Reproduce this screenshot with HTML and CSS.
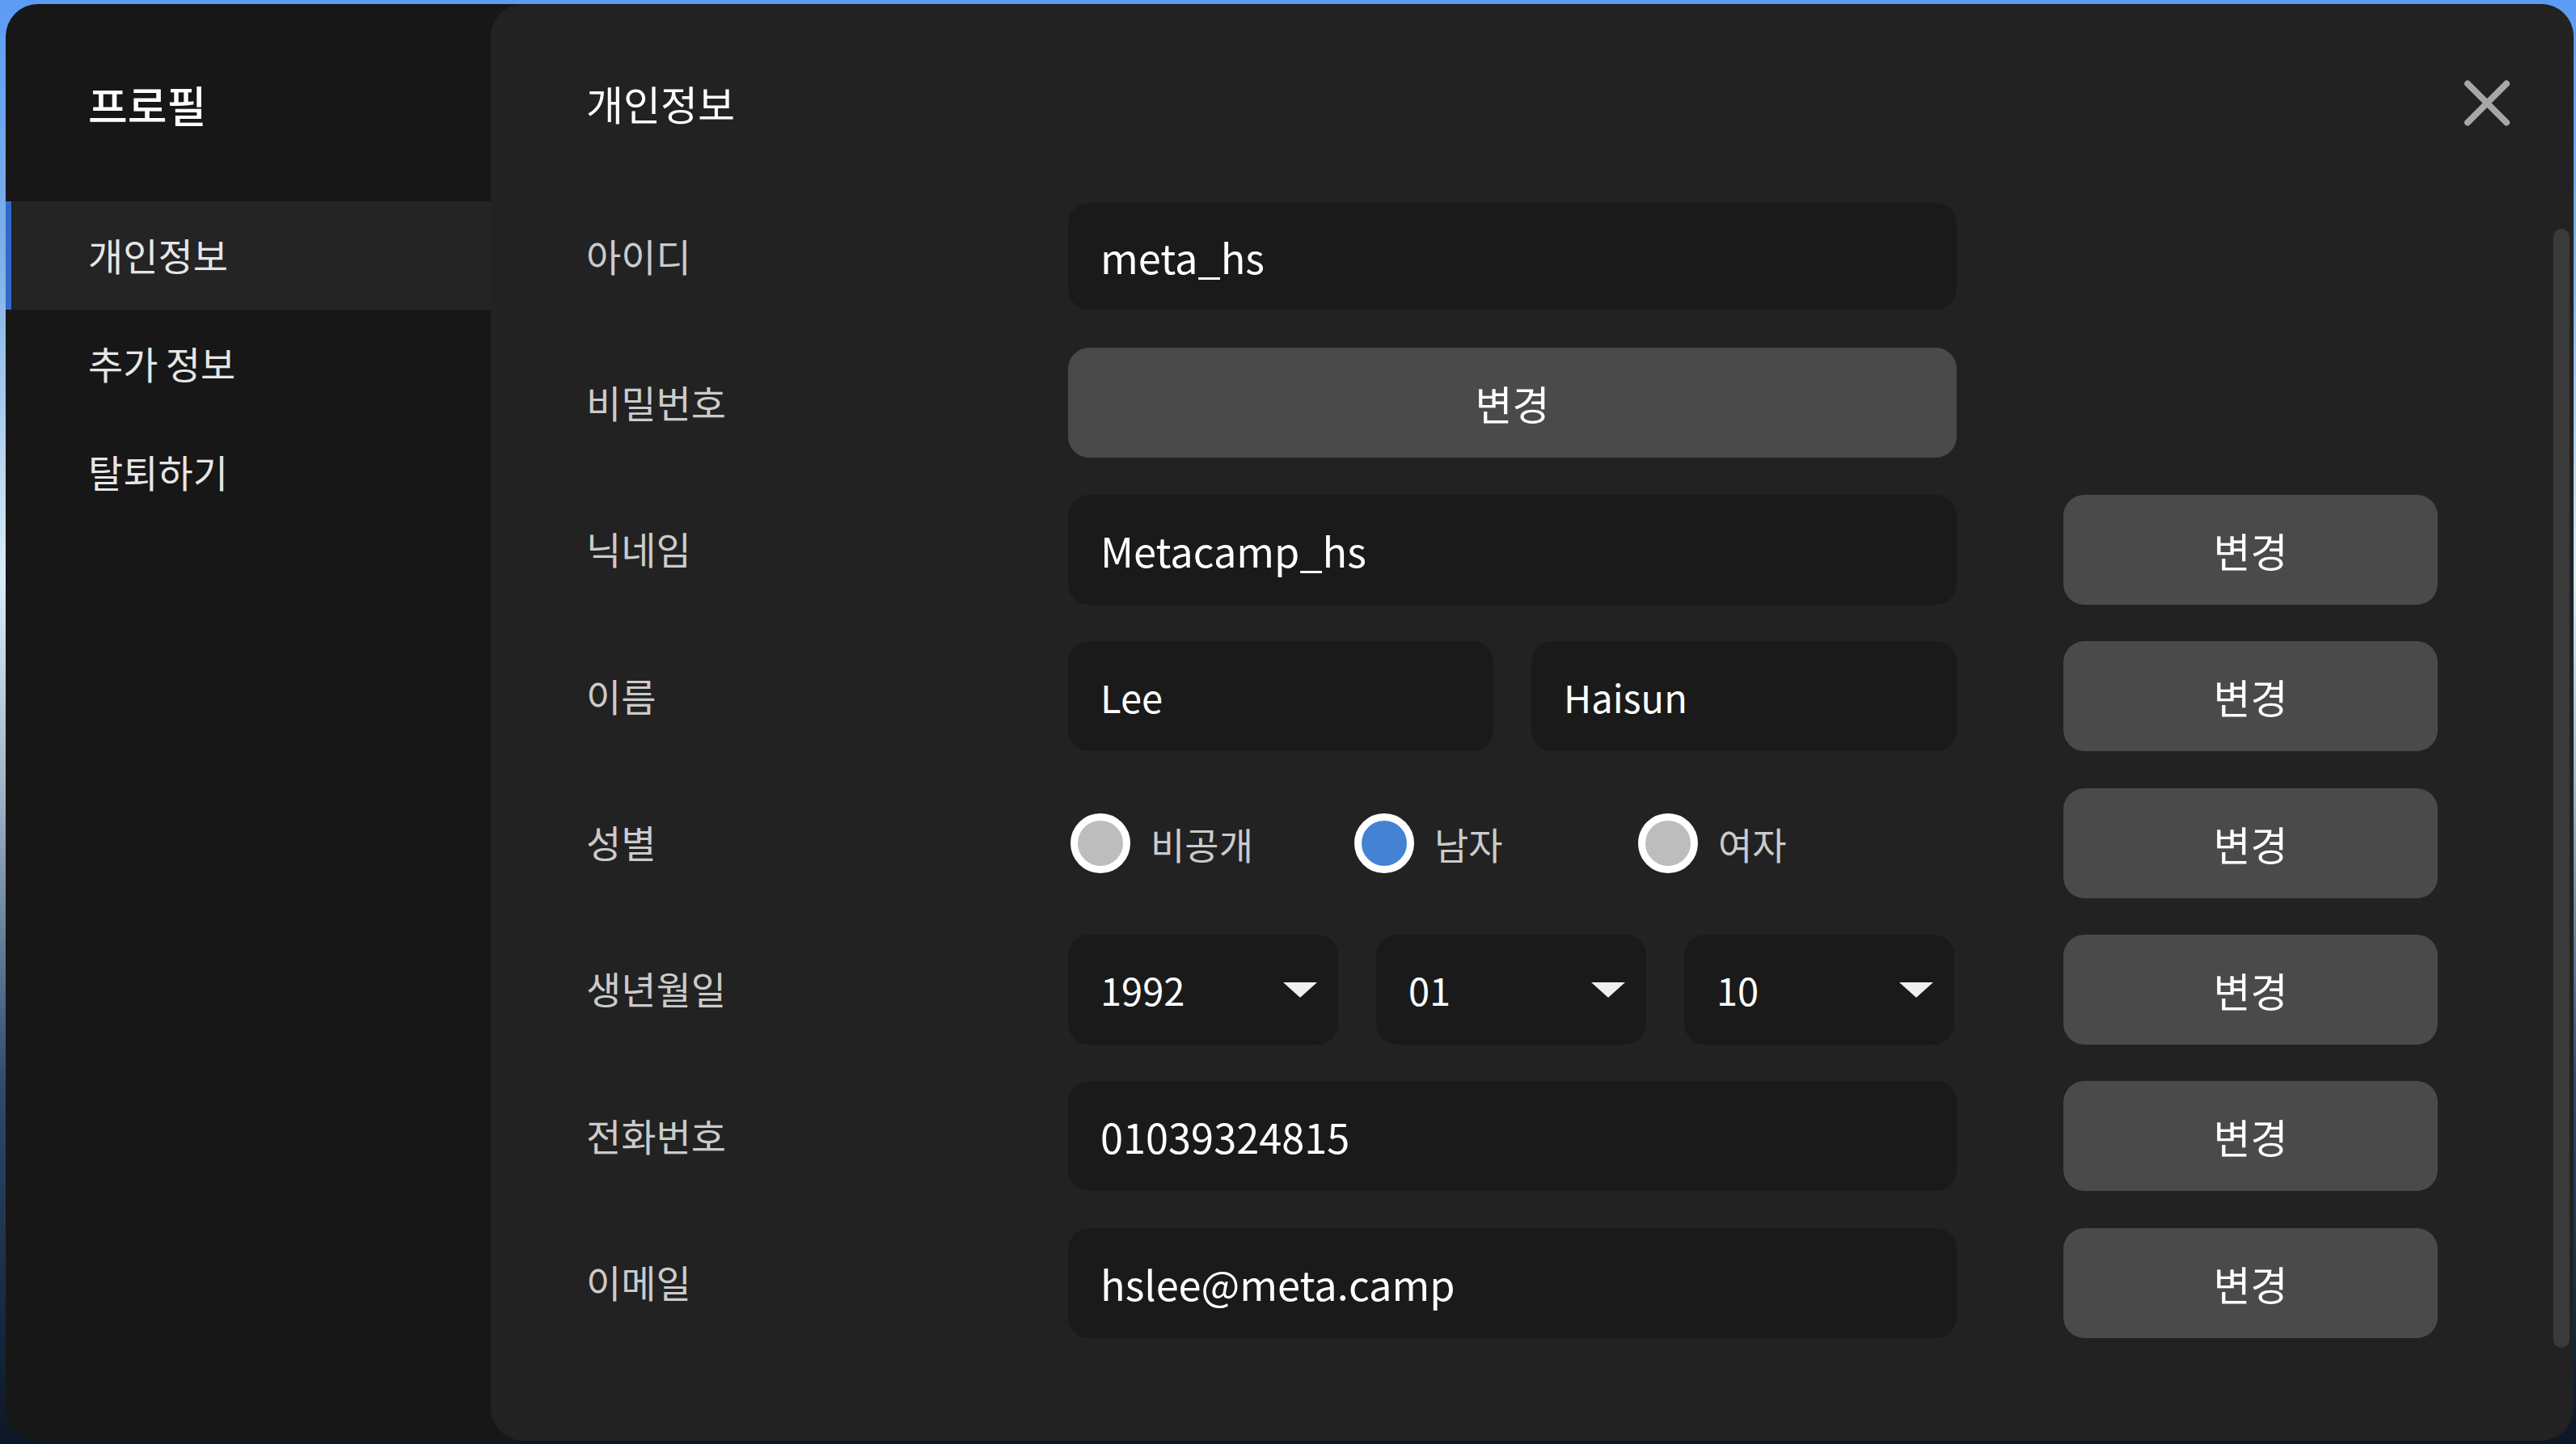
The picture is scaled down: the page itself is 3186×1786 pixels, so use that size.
FILE: index.html
```html
<!DOCTYPE html>
<html lang="ko">
<head>
<meta charset="utf-8">
<title>프로필</title>
<link rel="stylesheet" href="styles.css">
</head>
<body>
<div class="stage">
  <div class="modal">
    <aside class="sidebar">
      <div class="side-title">프로필</div>
      <nav class="side-nav">
        <div class="side-item active">개인정보</div>
        <div class="side-item">추가 정보</div>
        <div class="side-item">탈퇴하기</div>
      </nav>
    </aside>
    <main class="panel">
      <header class="panel-head">
        <h1 class="panel-title">개인정보</h1>
        <button class="close" aria-label="닫기">
          <svg width="56" height="57" viewBox="0 0 56 57"><path d="M4 4.5 L52 52.5 M52 4.5 L4 52.5" stroke="#a7a7a7" stroke-width="8" stroke-linecap="round" fill="none"/></svg>
        </button>
      </header>
      <div class="rows">
        <div class="row">
          <div class="label">아이디</div>
          <div class="field big field-id">meta_hs</div>
        </div>
        <div class="row">
          <div class="label">비밀번호</div>
          <div class="btn">변경</div>
        </div>
        <div class="row">
          <div class="label">닉네임</div>
          <div class="field big">Metacamp_hs</div>
          <div class="btn">변경</div>
        </div>
        <div class="row">
          <div class="label">이름</div>
          <div class="split2">
            <div class="field">Lee</div>
            <div class="field">Haisun</div>
          </div>
          <div class="btn">변경</div>
        </div>
        <div class="row">
          <div class="label">성별</div>
          <div class="radios">
            <div class="radio"><span class="dot"></span><span class="rlabel">비공개</span></div>
            <div class="radio checked"><span class="dot"></span><span class="rlabel">남자</span></div>
            <div class="radio"><span class="dot"></span><span class="rlabel">여자</span></div>
          </div>
          <div class="btn">변경</div>
        </div>
        <div class="row">
          <div class="label">생년월일</div>
          <div class="split3">
            <div class="field select">1992<svg class="arrow" width="44" height="20" viewBox="0 0 44 20"><path d="M1 1 H43 L23 19 Q22 20 21 19 Z" fill="#efefef"/></svg></div>
            <div class="field select">01<svg class="arrow" width="44" height="20" viewBox="0 0 44 20"><path d="M1 1 H43 L23 19 Q22 20 21 19 Z" fill="#efefef"/></svg></div>
            <div class="field select">10<svg class="arrow" width="44" height="20" viewBox="0 0 44 20"><path d="M1 1 H43 L23 19 Q22 20 21 19 Z" fill="#efefef"/></svg></div>
          </div>
          <div class="btn">변경</div>
        </div>
        <div class="row">
          <div class="label">전화번호</div>
          <div class="field big">01039324815</div>
          <div class="btn">변경</div>
        </div>
        <div class="row">
          <div class="label">이메일</div>
          <div class="field big">hslee@meta.camp</div>
          <div class="btn">변경</div>
        </div>
      </div>
      <div class="scrollbar"></div>
    </main>
  </div>
</div>
</body>
</html>
```
FILE: styles.css
```css
* { box-sizing: border-box; }
html, body { margin: 0; padding: 0; }
body {
  width: 3186px;
  height: 1786px;
  overflow: hidden;
  font-family: "Noto Sans CJK KR", "Noto Sans", sans-serif;
  background: linear-gradient(180deg, #5b9cf4 0%, #7fb0e6 18%, #d9ecf6 40%, #9fb3c6 55%, #2e4a6c 75%, #0c1626 100%);
}
.stage {
  padding: 5px 3px 4px 7px;
  height: 1786px;
}
.modal {
  display: flex;
  height: 1777px;
  background: #171717;
  border-radius: 40px;
  overflow: hidden;
}
.sidebar {
  width: 600px;
  flex: none;
  display: flex;
  flex-direction: column;
}
.side-title {
  height: 244px;
  padding: 92px 0 0 102px;
  font-size: 53px;
  line-height: 64px;
  font-weight: 500;
  color: #ffffff;
}
.side-nav { display: flex; flex-direction: column; }
.side-item {
  height: 134px;
  display: flex;
  align-items: center;
  padding-left: 102px;
  padding-bottom: 4px;
  font-size: 47px;
  word-spacing: -4px;
  color: #e6e6e6;
}
.side-item.active {
  background: #242424;
  border-left: 7px solid #3168cc;
  padding-left: 95px;
}
.panel {
  position: relative;
  flex: 1;
  background: #222222;
  border-radius: 40px;
  padding-left: 118px;
}
.panel-head {
  height: 244px;
  display: flex;
  justify-content: space-between;
  align-items: flex-start;
  padding: 90px 79px 0 0;
}
.panel-title {
  margin: 0;
  font-size: 50px;
  line-height: 64px;
  font-weight: 400;
  color: #ffffff;
}
.close {
  margin-top: 4px;
  padding: 0;
  border: 0;
  background: none;
  width: 56px;
  height: 57px;
  display: block;
}
.close svg { display: block; }
.rows {
  display: flex;
  flex-direction: column;
  gap: 45.4px;
}
.row {
  display: grid;
  grid-template-columns: 464px 1099px 463px;
  column-gap: 132px;
  height: 136px;
  align-items: center;
}
.label {
  font-size: 47px;
  padding-bottom: 4px;
  color: #cbcbcb;
}
.field {
  height: 136px;
  background: #1a1a1a;
  border-radius: 26px;
  display: flex;
  align-items: center;
  padding: 0 40px;
  font-size: 47px;
  color: #ffffff;
}
.field.big { font-size: 50.5px; }
.field-id { height: 132px; }
.btn {
  height: 136px;
  background: #4a4a4a;
  border-radius: 26px;
  display: flex;
  align-items: center;
  justify-content: center;
  font-size: 50px;
  color: #ffffff;
}
.split2 {
  display: grid;
  grid-template-columns: 1fr 1fr;
  column-gap: 47px;
}
.split3 {
  width: 1096px;
  display: grid;
  grid-template-columns: 1fr 1fr 1fr;
  column-gap: 47px;
}
.select {
  justify-content: space-between;
  padding-right: 25px;
}
.arrow { display: block; flex: none; }
.radios {
  display: flex;
  align-items: center;
  height: 136px;
  padding-left: 3px;
}
.radio {
  width: 351px;
  display: flex;
  align-items: center;
  gap: 25px;
}
.dot {
  width: 74px;
  height: 74px;
  border-radius: 50%;
  border: 9.5px solid #ffffff;
  background: #bdbdbd;
  flex: none;
}
.radio.checked .dot { background: #4482d3; }
.rlabel {
  font-size: 46px;
  color: #cbcbcb;
}
.scrollbar {
  position: absolute;
  right: 5px;
  top: 278px;
  width: 20px;
  height: 1384px;
  border-radius: 10px;
  background: #3a3a3a;
}
```
